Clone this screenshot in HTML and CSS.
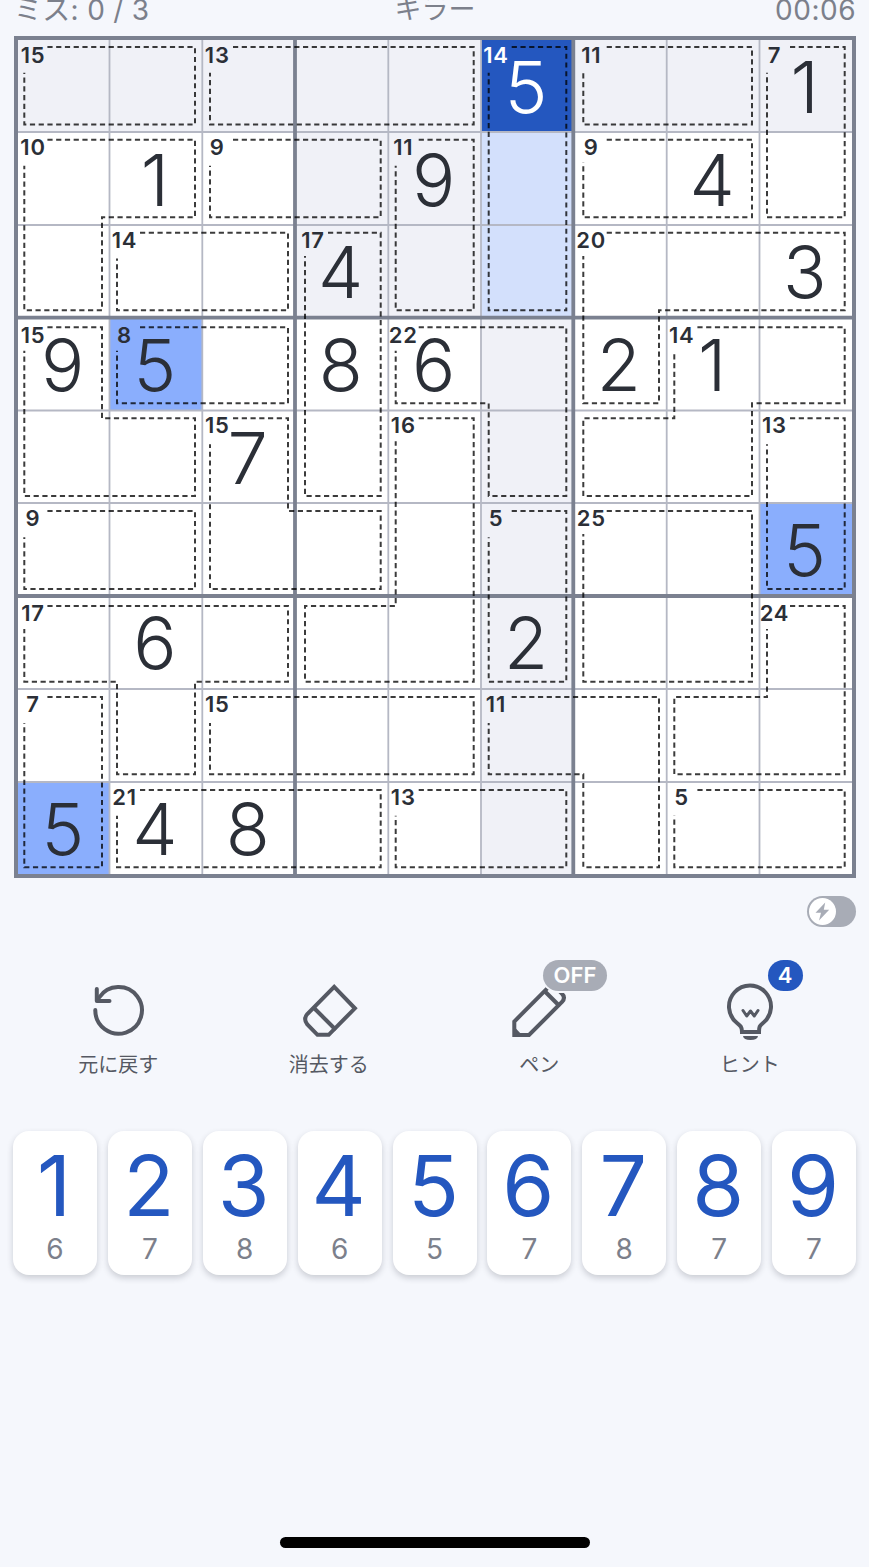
FILE: index.html
```html
<!DOCTYPE html>
<html lang="ja">
<head>
	<meta charset="UTF-8">
	<title>キラー</title>
	<link rel="stylesheet" href="styles.css">
</head>
<body>
	<div class="info">
		<span class="miss">ミス: 0 / 3</span>
		<span class="level">キラー</span>
		<span class="time">00:06</span>
	</div>
	<div id="board" class="board">
		<svg class="lines" viewBox="14 36 842 842">
			<path class="thin" d="M109.5 40V874M202.3 40V874M388.3 40V874M481 40V874M666.7 40V874M759.5 40V874M18 132H852M18 225H852M18 410.5H852M18 503H852M18 689H852M18 782H852"/>
			<path class="thick" d="M295 40V874M573.3 40V874M18 317.6H852M18 596H852"/>
			<g class="cages">
				<path d="M47.4 47H195V124.5H24.3V72.7"/>
				<path d="M233 47H473.7V124.5H210V72.7"/>
				<path d="M511.7 47H566.3V310.3H488.7V72.7"/>
				<path d="M606.7 47H752V124.5H583.3V69.7"/>
				<path d="M790 47H844.7V217.3H767V72.7"/>
				<path d="M47.4 139.7H195V217.3H102V310.3H24.3V165.7"/>
				<path d="M233 139.7H380.7V217.3H210V165.7"/>
				<path d="M418.7 139.7H473.7V310.3H395.7V165.7"/>
				<path d="M606.7 139.7H752V217.3H583.3V162.5"/>
				<path d="M140 232.7H288V310.3H117V258.5"/>
				<path d="M328 232.7H380.7V496H305V256"/>
				<path d="M606.7 232.7H844.7V310.3H659V403.3H583.3V256"/>
				<path d="M47.4 327.3H102V418.3H195V496H24.3V350.7"/>
				<path d="M140 327.3H288V403.3H117V350.7"/>
				<path d="M418.7 327.3H566.3V496H488.7V403.3H395.7V350.7"/>
				<path d="M697.4 327.3H844.7V403.3H752V496H583.3V418.3H674.3V353.5"/>
				<path d="M233 418.3H288V511H380.7V589H210V444.3"/>
				<path d="M418.7 418.3H473.7V681.7H305V606H395.7V441.3"/>
				<path d="M790 418.3H844.7V589H767V444.3"/>
				<path d="M47.4 511H195V589H24.3V537.3"/>
				<path d="M511.7 511H566.3V681.7H488.7V537.3"/>
				<path d="M606.7 511H752V681.7H583.3V534"/>
				<path d="M47.4 606H288V681.7H195V774.3H117V681.7H24.3V629"/>
				<path d="M790 606H844.7V774.3H674.3V697H767V629"/>
				<path d="M47.4 697H102V867.3H24.3V723"/>
				<path d="M233 697H473.7V774.3H210V723"/>
				<path d="M511.7 697H659V867.3H583.3V774.3H488.7V723"/>
				<path d="M140 790H380.7V867.3H117V815.7"/>
				<path d="M418.7 790H566.3V867.3H395.7V815.7"/>
				<path d="M697.4 790H844.7V867.3H674.3V815.7"/>
			</g>
		</svg>
	</div>
	<div class="option">
		<div class="switch">
			<span class="knob">
				<svg viewBox="0 0 27 27" width="27" height="27"><path d="M16.2 4.5L6.5 14.8H12L10 22.5L20.2 11.8H14.8Z"/></svg>
			</span>
		</div>
	</div>
	<div class="tools">
		<div class="tool">
			<svg class="icon" viewBox="0 0 64 64" width="64" height="64">
				<path d="M9.3 34A23.3 23.3 0 1 0 13.2 21.5"/>
				<path d="M10.8 13V25H23.5"/>
			</svg>
			<span class="name">元に戻す</span>
		</div>
		<div class="tool">
			<svg class="icon" viewBox="0 0 64 64" width="64" height="64">
				<path class="sharp" d="M37.2 10.9L57.9 32.3L31.700 58.800H20.5L10.3 48.5Q6 43 10.3 38Z"/>
				<path class="sharp" d="M17.5 32.500L37.500 52.500"/>
			</svg>
			<span class="name">消去する</span>
		</div>
		<div class="tool">
			<svg class="icon" viewBox="0 0 64 64" width="64" height="64">
				<path class="sharp" d="M7.3 59V45.5L40.5 12.2Q45 8 50 12.7L54.8 17.5Q59 21.500 55 26L22 59Z"/>
				<path class="sharp" d="M38 15.500L51.500 29"/>
				<path class="fill" d="M7 50.5L15.5 59.500H7Z"/>
			</svg>
			<span class="badge off">OFF</span>
			<span class="name">ペン</span>
		</div>
		<div class="tool">
			<svg class="icon" viewBox="0 0 64 64" width="64" height="64">
				<path class="sharp" d="M24 56C24 51 22.5 49.8 19 47A21 21 0 1 1 45 47C41.5 49.8 41 51 41 56Z"/>
				<path class="small" d="M25 34.5L28.7 40L32.5 35L36.3 40L40 34.5"/>
				<path class="fill" d="M25 60H40Q39.5 64 32.5 64Q25.5 64 25 60Z"/>
			</svg>
			<span class="badge count">4</span>
			<span class="name">ヒント</span>
		</div>
	</div>
	<ul class="pad">
		<li><b>1</b><span>6</span></li>
		<li><b>2</b><span>7</span></li>
		<li><b>3</b><span>8</span></li>
		<li><b>4</b><span>6</span></li>
		<li><b>5</b><span>5</span></li>
		<li><b>6</b><span>7</span></li>
		<li><b>7</b><span>8</span></li>
		<li><b>8</b><span>7</span></li>
		<li><b>9</b><span>7</span></li>
	</ul>
	<div class="home"></div>
	<script>
		var board=document.getElementById('board');
		var nums=[
			'.....5..1',
			'.1..9..4.',
			'...4....3',
			'95.86.21.',
			'..7......',
			'........5',
			'.6...2...',
			'.........',
			'548......'
		];
		// s: selected, a: same cage, b: same number, r: row / column / box
		var marks=[
			'rrrrrsrrr',
			'...rra...',
			'...rra...',
			'.b...r...',
			'.....r...',
			'.....r..b',
			'.....r...',
			'.....r...',
			'b....r...'
		];
		var names={s:'selected',a:'cage',b:'same',r:'area'};
		var sums=[
			[15,0,13,0,0,14,11,0,7],
			[10,0,9,0,11,0,9,0,0],
			[0,14,0,17,0,0,20,0,0],
			[15,8,0,0,22,0,0,14,0],
			[0,0,15,0,16,0,0,0,13],
			[9,0,0,0,0,5,25,0,0],
			[17,0,0,0,0,0,0,0,24],
			[7,0,15,0,0,11,0,0,0],
			[0,21,0,0,13,0,0,5,0]
		];
		var lines=board.getElementsByClassName('lines')[0];
		for(var i=0;i<9;i++){
			for(var j=0;j<9;j++){
				var cell=document.createElement('div');
				cell.className='cell';
				if(names[marks[i][j]]){
					cell.className+=' '+names[marks[i][j]];
				}
				if(j==3||j==6){
					cell.className+=' box-left';
				}
				if(i==3||i==6){
					cell.className+=' box-top';
				}
				if(sums[i][j]){
					var sum=document.createElement('span');
					sum.className='sum';
					sum.textContent=sums[i][j];
					cell.appendChild(sum);
				}
				if(nums[i][j]!='.'){
					var num=document.createElement('span');
					num.className='num';
					num.textContent=nums[i][j];
					cell.appendChild(num);
				}
				board.insertBefore(cell,lines);
			}
		}
	</script>
</body>
</html>
```
FILE: styles.css
```css
*{
	box-sizing: border-box;
}
body{
	margin: 0;
	height: 1567px;
	padding: 0 13px 0 14px;
	overflow: hidden;
	display: flex;
	flex-direction: column;
	background: #f5f7fc;
	font-family: Inter, "Noto Sans CJK JP", sans-serif;
}
ul{
	list-style: none;
	margin: 0;
	padding: 0;
}
.info{
	display: grid;
	grid-template-columns: 1fr auto 1fr;
	height: 36px;
	line-height: 20px;
	font-size: 27px;
	color: #7c808b;
}
.miss{
	font-size: 28px;
	letter-spacing: .3px;
}
.time{
	font-size: 28px;
	letter-spacing: .5px;
	text-align: right;
}
.board{
	position: relative;
	flex: none;
	width: 842px;
	height: 842px;
	border: 4px solid #7b8190;
	background: #fff;
	display: grid;
	grid-template-columns: 91.5px 92.8px 92.7px 93.3px 92.7px 92.3px 93.4px 92.8px 92.5px;
	grid-template-rows: 92px 93px 92.6px 92.9px 92.5px 93px 93px 93px 92px;
}
.cell{
	position: relative;
	display: flex;
	align-items: center;
	justify-content: center;
	color: #2b2f37;
}
.num{
	font-size: 72px;
	font-weight: 300;
	line-height: 90px;
	padding-top: 2px;
	margin-left: -2px;
}
.sum{
	position: absolute;
	left: -1px;
	top: 1px;
	width: 32px;
	line-height: 28px;
	font-size: 22px;
	font-weight: 600;
	letter-spacing: .8px;
	text-align: center;
}
.box-left .sum{
	left: 2px;
}
.box-top .sum{
	top: 3px;
}
.area{
	background: #f0f1f7;
}
.cage{
	background: #d3e0fc;
}
.same{
	background: #8aaefd;
}
.selected{
	background: #2457bf;
	color: #fff;
}
.lines{
	position: absolute;
	left: -4px;
	top: -4px;
	width: 842px;
	height: 842px;
	fill: none;
}
.thin{
	stroke: #b5b8c4;
	stroke-width: 1.8;
}
.thick{
	stroke: #7b8190;
	stroke-width: 3.8;
}
.cages{
	stroke: rgba(0,0,0,.77);
	stroke-width: 2;
	stroke-dasharray: 5.2 3.55;
}
.option{
	display: flex;
	justify-content: flex-end;
	padding-top: 18px;
}
.switch{
	width: 49px;
	height: 31px;
	padding: 2px;
	border-radius: 16px;
	background: #a8acb6;
}
.knob{
	display: block;
	width: 27px;
	height: 27px;
	border-radius: 50%;
	background: #fff;
}
.knob path{
	fill: #a8acb6;
}
.tools{
	display: flex;
	margin: 49px 1px 0 -1px;
	height: 155px;
}
.tool{
	position: relative;
	flex: 1;
	display: flex;
	flex-direction: column;
	align-items: center;
}
.icon{
	fill: none;
	stroke: #555963;
	stroke-width: 4;
	stroke-linecap: round;
	stroke-linejoin: round;
}
.icon .sharp{
	stroke-linejoin: miter;
}
.icon .small{
	stroke-width: 3;
}
.icon .fill{
	fill: #555963;
	stroke: none;
}
.name{
	margin-top: 10px;
	font-size: 20px;
	line-height: 30px;
	color: #555963;
}
.badge{
	position: absolute;
	top: -16px;
	height: 31px;
	line-height: 31px;
	border-radius: 16px;
	color: #fff;
	font-size: 22px;
	font-weight: 600;
	text-align: center;
}
.off{
	left: 109px;
	width: 64px;
	background: #a8acb6;
	box-shadow: 0 0 0 2px #f5f7fc;
}
.count{
	left: 123px;
	width: 35px;
	background: #2457bf;
}
.pad{
	display: flex;
	justify-content: space-between;
	margin-left: -1px;
}
.pad li{
	width: 84px;
	height: 144px;
	border-radius: 16px;
	background: #fff;
	box-shadow: 0 3px 6px rgba(30,35,50,.2);
	display: flex;
	flex-direction: column;
	align-items: center;
}
.pad b{
	font-size: 84px;
	font-weight: 400;
	line-height: 84px;
	margin: 13px 2px 0 0;
	color: #2457bf;
}
.pad span{
	font-size: 28px;
	line-height: 34px;
	margin-top: 4px;
	color: #7c808b;
}
.home{
	width: 310px;
	height: 11px;
	margin: auto auto 19px 266px;
	border-radius: 6px;
	background: #000;
}
```
